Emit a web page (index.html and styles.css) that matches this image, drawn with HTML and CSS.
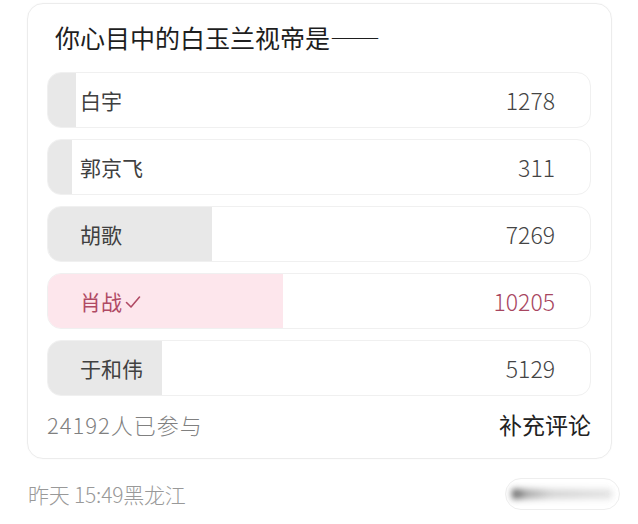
FILE: index.html
```html
<!DOCTYPE html>
<html lang="zh-CN">
<head>
<meta charset="utf-8">
<link rel="stylesheet" href="styles.css">
</head>
<body>
<div class="page">
  <div class="card">
    <div class="title">你心目中的白玉兰视帝是——</div>
    <div class="options">
      <div class="option">
        <div class="fill" style="width:28px"></div>
        <span class="label">白宇</span>
        <span class="count">1278</span>
      </div>
      <div class="option">
        <div class="fill" style="width:24px"></div>
        <span class="label">郭京飞</span>
        <span class="count">311</span>
      </div>
      <div class="option">
        <div class="fill" style="width:164px"></div>
        <span class="label">胡歌</span>
        <span class="count">7269</span>
      </div>
      <div class="option chosen">
        <div class="fill" style="width:235px"></div>
        <span class="label">肖战<svg class="check" width="16" height="14" viewBox="0 0 16 14"><path d="M1.5 7.5 L6 12 L14.5 2" fill="none" stroke="currentColor" stroke-width="1.6" stroke-linecap="round" stroke-linejoin="round"/></svg></span>
        <span class="count">10205</span>
      </div>
      <div class="option">
        <div class="fill" style="width:114px"></div>
        <span class="label">于和伟</span>
        <span class="count">5129</span>
      </div>
    </div>
    <div class="footer">
      <span class="joined">24192人已参与</span>
      <span class="more">补充评论</span>
    </div>
  </div>
  <div class="meta">
    <span class="time">昨天 15:49黑龙江</span>
    <div class="blurbtn"><div class="blur"></div></div>
  </div>
</div>
</body>
</html>
```
FILE: styles.css
```css
* { box-sizing: border-box; }
html, body { margin: 0; padding: 0; background: #fff; }
body {
  font-family: "Noto Sans CJK SC", "Noto Sans", sans-serif;
  width: 638px;
  height: 524px;
  overflow: hidden;
}
.page {
  padding: 3px 0 0 27px;
}
.card {
  width: 585px;
  height: 456px;
  border: 1px solid #ececec;
  border-radius: 16px;
  padding: 15px 20px 0 19px;
  box-shadow: 0 0 2px rgba(0,0,0,0.03);
}
.title {
  font-size: 25px;
  line-height: 36px;
  color: #1e1e1e;
  padding-left: 8px;
  margin-bottom: 17px;
}
.options {
  display: flex;
  flex-direction: column;
  gap: 11px;
}
.option {
  position: relative;
  height: 56px;
  border: 1px solid #f0f0f0;
  border-radius: 14px;
  overflow: hidden;
  display: flex;
  align-items: center;
  justify-content: space-between;
  padding: 0 35px 0 32px;
}
.fill {
  position: absolute;
  left: 0;
  top: 0;
  bottom: 0;
  background: #e8e8e8;
}
.label, .count {
  position: relative;
  color: #3a3a3a;
}
.label {
  font-size: 21px;
  display: flex;
  align-items: center;
  color: #404040;
}
.count {
  font-size: 23px;
  font-weight: 300;
  color: #444;
}
.chosen .fill { background: #fde6ec; }
.chosen .label { color: #b04a64; }
.chosen .count { color: #a8465f; }
.check { margin-left: 3px; margin-top: 2px; }
.footer {
  display: flex;
  justify-content: space-between;
  align-items: center;
  height: 30px;
  margin-top: 13px;
}
.joined {
  font-size: 22px;
  font-weight: 300;
  color: #808080;
  letter-spacing: 1px;
}
.more {
  font-size: 23px;
  color: #222;
}
.meta {
  display: flex;
  justify-content: space-between;
  align-items: center;
  margin-top: 19px;
  padding-left: 1px;
  width: 593px;
}
.time {
  font-size: 21px;
  font-weight: 300;
  color: #999;
  letter-spacing: -0.2px;
}
.blurbtn {
  width: 115px;
  height: 32px;
  border: 1px solid #eee;
  border-radius: 16px;
  display: flex;
  align-items: center;
  padding-left: 6px;
  overflow: hidden;
}
.blur {
  width: 100px;
  height: 10px;
  background: linear-gradient(90deg, #333 0%, #999 15%, #ccc 40%, #ddd 100%);
  filter: blur(3px);
  opacity: 0.8;
}
```
